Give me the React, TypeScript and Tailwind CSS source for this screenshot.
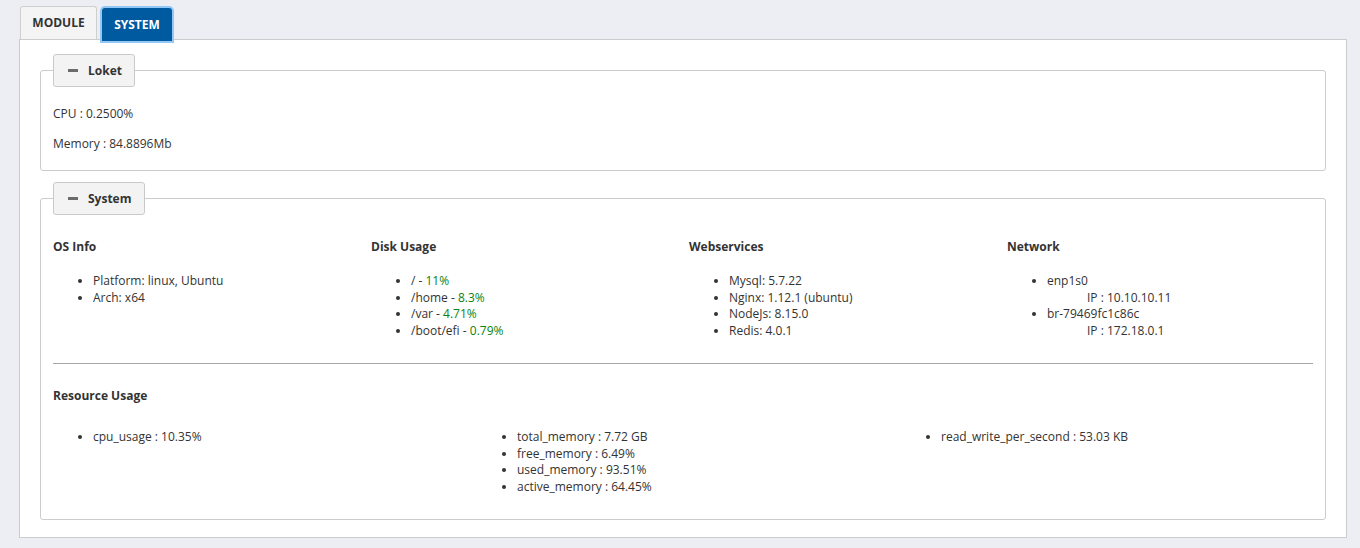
import React from "react";

const font = { fontFamily: '"Open Sans", "Noto Sans", sans-serif' };

function Legend({ label, width }: { label: string; width: string }) {
  return (
    <legend className={`h-[33px] ${width} flex items-center rounded-[3px] border border-[#c9c9c9] bg-[#f3f3f3] pl-[14px]`}>
      <span className="block h-[3px] w-[10px] bg-[#6b6b6b]" />
      <span className="ml-[10px] text-[12px] font-bold text-[#333]">{label}</span>
    </legend>
  );
}

const G = ({ children }: { children: React.ReactNode }) => (
  <span className="text-[#0d820d]">{children}</span>
);

export default function App() {
  return (
    <div style={font} className="min-h-[548px] bg-[#eceef3] pl-[19px] pr-[13px] pt-[5px] text-[12px] text-[#333]">
      <div className="flex h-[34px] items-end pl-[1px]">
        <div className="flex h-[33px] w-[77px] items-center justify-center rounded-t-[3px] border border-b-0 border-[#cfcfcf] bg-[#f4f4f4] text-[12px] font-bold text-[#333]">
          MODULE
        </div>
        <div className="relative z-10 ml-[5px] mb-[-2px] flex h-[33px] w-[70px] items-center justify-center rounded-t-[3px] bg-[#005a9f] text-[12px] font-bold text-white ring-2 ring-[#93c8f6]">
          SYSTEM
        </div>
      </div>
      <div className="border border-[#cccccc] bg-white px-[20px] pb-[17px] pt-[14px]">
        <fieldset className="min-w-0 rounded-[3px] border border-[#cccccc] px-[12px] pb-[18px]">
          <Legend label="Loket" width="w-[82px]" />
          <div className="pt-[18px] leading-[17px]">
            <p>CPU : 0.2500%</p>
            <p className="mt-[13px]">Memory : 84.8896Mb</p>
          </div>
        </fieldset>

        <fieldset className="mt-[11px] min-w-0 rounded-[3px] border border-[#cccccc] px-[12px] pb-[23px]">
          <Legend label="System" width="w-[92px]" />
          <div className="pt-[23px] leading-[17px]">
            <div className="grid grid-cols-[318px_318px_318px_318px]">
              <div>
                <h4 className="font-bold">OS Info</h4>
                <ul className="mt-[18px] list-disc pl-[40px] leading-[16.7px]">
                  <li>Platform: linux, Ubuntu</li>
                  <li>Arch: x64</li>
                </ul>
              </div>
              <div>
                <h4 className="font-bold">Disk Usage</h4>
                <ul className="mt-[18px] list-disc pl-[40px] leading-[16.7px]">
                  <li>/ - <G>11%</G></li>
                  <li>/home - <G>8.3%</G></li>
                  <li>/var - <G>4.71%</G></li>
                  <li>/boot/efi - <G>0.79%</G></li>
                </ul>
              </div>
              <div>
                <h4 className="font-bold">Webservices</h4>
                <ul className="mt-[18px] list-disc pl-[40px] leading-[16.7px]">
                  <li>Mysql: 5.7.22</li>
                  <li>Nginx: 1.12.1 (ubuntu)</li>
                  <li>NodeJs: 8.15.0</li>
                  <li>Redis: 4.0.1</li>
                </ul>
              </div>
              <div>
                <h4 className="font-bold">Network</h4>
                <ul className="mt-[18px] list-disc pl-[40px] leading-[16.7px]">
                  <li>
                    enp1s0
                    <div className="pl-[40px]">IP : 10.10.10.11</div>
                  </li>
                  <li>
                    br-79469fc1c86c
                    <div className="pl-[40px]">IP : 172.18.0.1</div>
                  </li>
                </ul>
              </div>
            </div>
            <hr className="mt-[23px] border-t border-[#a8a8a8]" />
            <h4 className="mt-[23px] font-bold">Resource Usage</h4>
            <div className="mt-[25px] grid grid-cols-[424px_424px_424px]">
              <ul className="list-disc pl-[40px] leading-[16.7px]">
                <li>cpu_usage : 10.35%</li>
              </ul>
              <ul className="list-disc pl-[40px] leading-[16.7px]">
                <li>total_memory : 7.72 GB</li>
                <li>free_memory : 6.49%</li>
                <li>used_memory : 93.51%</li>
                <li>active_memory : 64.45%</li>
              </ul>
              <ul className="list-disc pl-[40px] leading-[16.7px]">
                <li>read_write_per_second : 53.03 KB</li>
              </ul>
            </div>
          </div>
        </fieldset>
      </div>
    </div>
  );
}
